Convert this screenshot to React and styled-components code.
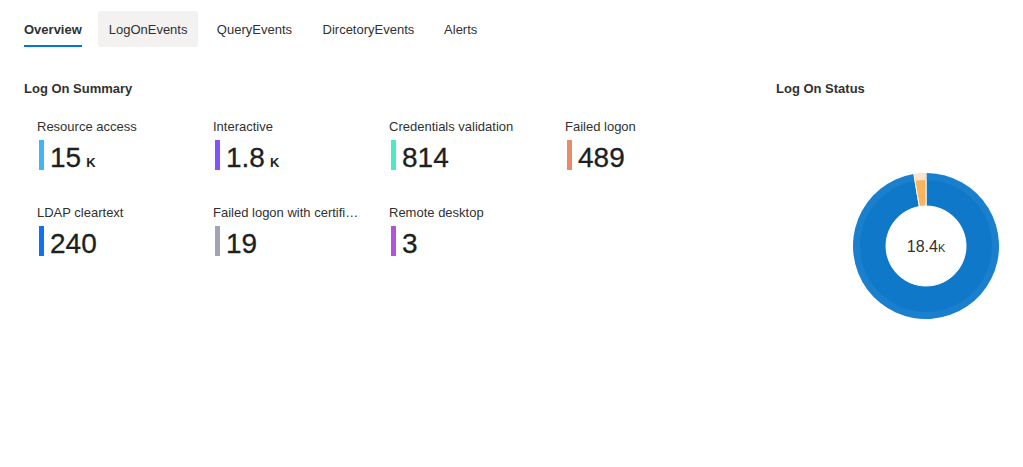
import styled, { createGlobalStyle } from "styled-components";

const GlobalStyle = createGlobalStyle`
  html, body {
    margin: 0;
    padding: 0;
    background: #ffffff;
    overflow: hidden;
  }
  body {
    font-family: "Liberation Sans", Arial, sans-serif;
    color: #323130;
  }
`;

const tabs = ["Overview", "LogOnEvents", "QueryEvents", "DircetoryEvents", "Alerts"];

const metrics = [
  { label: "Resource access", value: "15", unit: "K", color: "#41b6f0" },
  { label: "Interactive", value: "1.8", unit: "K", color: "#8654f6" },
  { label: "Credentials validation", value: "814", color: "#4be8c9" },
  { label: "Failed logon", value: "489", color: "#e78b6d" },
  { label: "LDAP cleartext", value: "240", color: "#1170ee" },
  { label: "Failed logon with certificate", value: "19", color: "#a1a3b9" },
  { label: "Remote desktop", value: "3", color: "#b252dd" },
];

const slices = [
  { value: 17911, color: "#0f78c9", band: "#1a80cd" },
  { value: 489, color: "#fbb35c", band: "#fde3cb" },
];

// annular sector, angles in degrees clockwise from 12 o'clock
function arc(cx, cy, r0, r1, a0, a1) {
  const pt = (r, a) => {
    const rad = ((a - 90) * Math.PI) / 180;
    return `${(cx + r * Math.cos(rad)).toFixed(2)} ${(cy + r * Math.sin(rad)).toFixed(2)}`;
  };
  const large = a1 - a0 > 180 ? 1 : 0;
  return `M ${pt(r1, a0)} A ${r1} ${r1} 0 ${large} 1 ${pt(r1, a1)} L ${pt(r0, a1)} A ${r0} ${r0} 0 ${large} 0 ${pt(r0, a0)} Z`;
}

function Donut() {
  const total = slices.reduce((s, d) => s + d.value, 0);
  let start = 0;
  return (
    <svg width="148" height="148" viewBox="0 0 148 148">
      {slices.map((s) => {
        const end = start + (s.value / total) * 360;
        const a0 = start;
        start = end;
        return (
          <g key={s.color}>
            <path d={arc(74, 74, 40, 73, a0, end)} fill={s.color} stroke="#fff" strokeWidth="1" />
            <path d={arc(74, 74, 66, 73, a0 + 0.4, end - 0.4)} fill={s.band} />
          </g>
        );
      })}
      <text x="74" y="80" textAnchor="middle" fill="#323130" fontFamily="Liberation Sans, Arial, sans-serif">
        <tspan fontSize="16">18.4</tspan>
        <tspan fontSize="11">K</tspan>
      </text>
    </svg>
  );
}

export default function App() {
  return (
    <>
      <GlobalStyle />
      <Page>
        <TabBar>
          {tabs.map((t, i) => (
            <Tab key={t} data-content={t} $selected={i === 0} $hover={i === 1}>
              <span>{t}</span>
            </Tab>
          ))}
        </TabBar>
        <Content>
          <Summary>
            <SectionTitle>Log On Summary</SectionTitle>
            <MetricGrid>
              {metrics.map((m) => (
                <Metric key={m.label}>
                  <Label>{m.label}</Label>
                  <ValueRow>
                    <Bar $color={m.color} />
                    <Value>
                      {m.value}
                      {m.unit && <Unit>{m.unit}</Unit>}
                    </Value>
                  </ValueRow>
                </Metric>
              ))}
            </MetricGrid>
          </Summary>
          <Status>
            <SectionTitle>Log On Status</SectionTitle>
            <ChartArea>
              <Donut />
            </ChartArea>
          </Status>
        </Content>
      </Page>
    </>
  );
}

const Page = styled.div`
  padding-top: 11px;
  width: 1023px;
  height: 467px;
  box-sizing: border-box;
`;

const TabBar = styled.div`
  display: flex;
  padding-left: 16px;
`;

const Tab = styled.button`
  position: relative;
  height: 36px;
  padding: 0 8px;
  margin-right: 8px;
  border: none;
  border-radius: 2px;
  background: ${(p) => (p.$hover ? "#f3f2f1" : "transparent")};
  font-family: "Liberation Sans", Arial, sans-serif;
  font-size: 13px;
  font-weight: ${(p) => (p.$selected ? 700 : 400)};
  color: #323130;
  cursor: pointer;

  &::before {
    content: attr(data-content);
    display: block;
    font-weight: 700;
    height: 0;
    overflow: hidden;
    visibility: hidden;
  }

  &::after {
    content: "";
    position: absolute;
    left: 8px;
    right: 8px;
    bottom: 0;
    height: 2px;
    background: ${(p) => (p.$selected ? "#0078d4" : "transparent")};
  }
`;

const Content = styled.div`
  display: flex;
  padding: 33px 0 0 24px;
`;

const Summary = styled.section`
  flex: 0 0 752px;
`;

const Status = styled.section`
  flex: 1;
`;

const SectionTitle = styled.h2`
  margin: 0;
  font-size: 13px;
  line-height: 18px;
  font-weight: 700;
  color: #323130;
`;

const MetricGrid = styled.div`
  display: grid;
  grid-template-columns: repeat(4, 176px);
  row-gap: 34px;
  padding: 20px 0 0 13px;
`;

const Metric = styled.div`
  display: flex;
  flex-direction: column;
  gap: 4px;
  min-width: 0;
`;

const Label = styled.div`
  font-size: 13px;
  line-height: 18px;
  max-width: 146px;
  white-space: nowrap;
  overflow: hidden;
  text-overflow: ellipsis;
`;

const ValueRow = styled.div`
  display: flex;
  align-items: flex-start;
  gap: 6px;
  height: 30px;
  padding-left: 2px;
`;

const Bar = styled.span`
  flex: 0 0 5px;
  height: 30px;
  background: ${(p) => p.$color};
`;

const Value = styled.span`
  display: flex;
  align-items: baseline;
  gap: 5px;
  font-size: 28px;
  line-height: 35px;
  color: #201f1e;
  -webkit-text-stroke: 0.3px #201f1e;
`;

const Unit = styled.span`
  font-size: 13px;
  font-weight: 700;
  -webkit-text-stroke: 0;
`;

const ChartArea = styled.div`
  padding: 74px 0 0 76px;
`;
